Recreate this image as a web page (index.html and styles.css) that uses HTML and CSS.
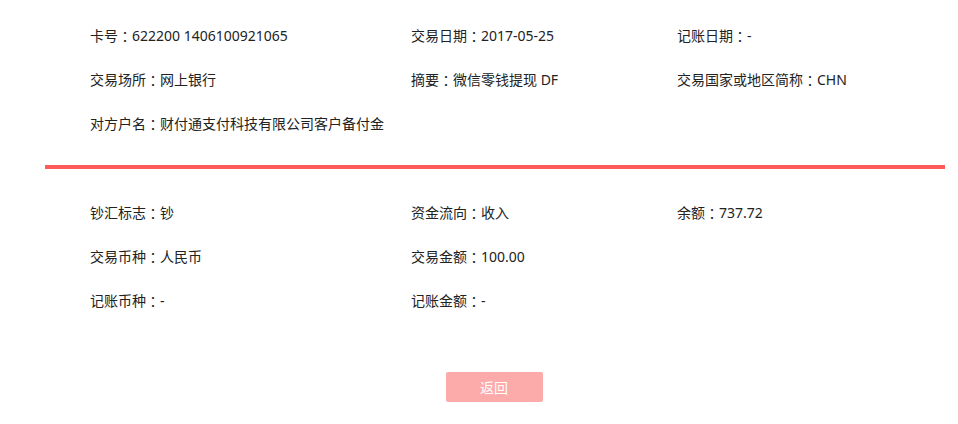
FILE: index.html
```html
<!DOCTYPE html>
<html lang="zh-CN">
<head>
    <meta charset="UTF-8">
    <title>交易明细</title>
    <link rel="stylesheet" href="styles.css">
</head>
<body>
    <div class="detail">
        <!-- 基本信息 -->
        <div class="info-grid">
            <div class="item">卡号<span class="sep">：</span>622200 1406100921065</div>
            <div class="item">交易日期<span class="sep">：</span>2017-05-25</div>
            <div class="item">记账日期<span class="sep">：</span>-</div>
            <div class="item">交易场所<span class="sep">：</span>网上银行</div>
            <div class="item">摘要<span class="sep">：</span>微信零钱提现 DF</div>
            <div class="item">交易国家或地区简称<span class="sep">：</span>CHN</div>
            <div class="item">对方户名<span class="sep">：</span>财付通支付科技有限公司客户备付金</div>
        </div>

        <div class="divider"></div>

        <!-- 金额信息 -->
        <div class="info-grid">
            <div class="item">钞汇标志<span class="sep">：</span>钞</div>
            <div class="item">资金流向<span class="sep">：</span>收入</div>
            <div class="item">余额<span class="sep">：</span>737.72</div>
            <div class="item">交易币种<span class="sep">：</span>人民币</div>
            <div class="item">交易金额<span class="sep">：</span>100.00</div>
            <div class="item"></div>
            <div class="item">记账币种<span class="sep">：</span>-</div>
            <div class="item">记账金额<span class="sep">：</span>-</div>
        </div>

        <div class="actions">
            <button class="btn-back">返回</button>
        </div>
    </div>
</body>
</html>
```

FILE: styles.css
```css
body { margin: 0; padding: 0; background: #fff; font-family: "Noto Sans", "Noto Sans CJK SC", sans-serif; font-size: 14px; color: #222; }
.detail { width: 900px; margin: 0 0 0 45px; padding-top: 13px; }
.info-grid { display: grid; grid-template-columns: 321px 266px 1fr; padding-left: 45px; }
.item { height: 44px; line-height: 44px; white-space: nowrap; }
.sep { display: inline-block; width: 14px; text-align: center; font-family: "Noto Sans CJK SC", sans-serif; font-feature-settings: "halt"; }
.divider { height: 4px; background: #ff5a5a; margin: 20px 0 21px; }
.actions { display: flex; justify-content: center; margin-top: 50px; padding-right: 2px; }
.btn-back { width: 97px; height: 30px; border: none; border-radius: 2px; background: #fdaaaa; color: #fff; font-family: inherit; font-size: 14px; cursor: pointer; }
```
